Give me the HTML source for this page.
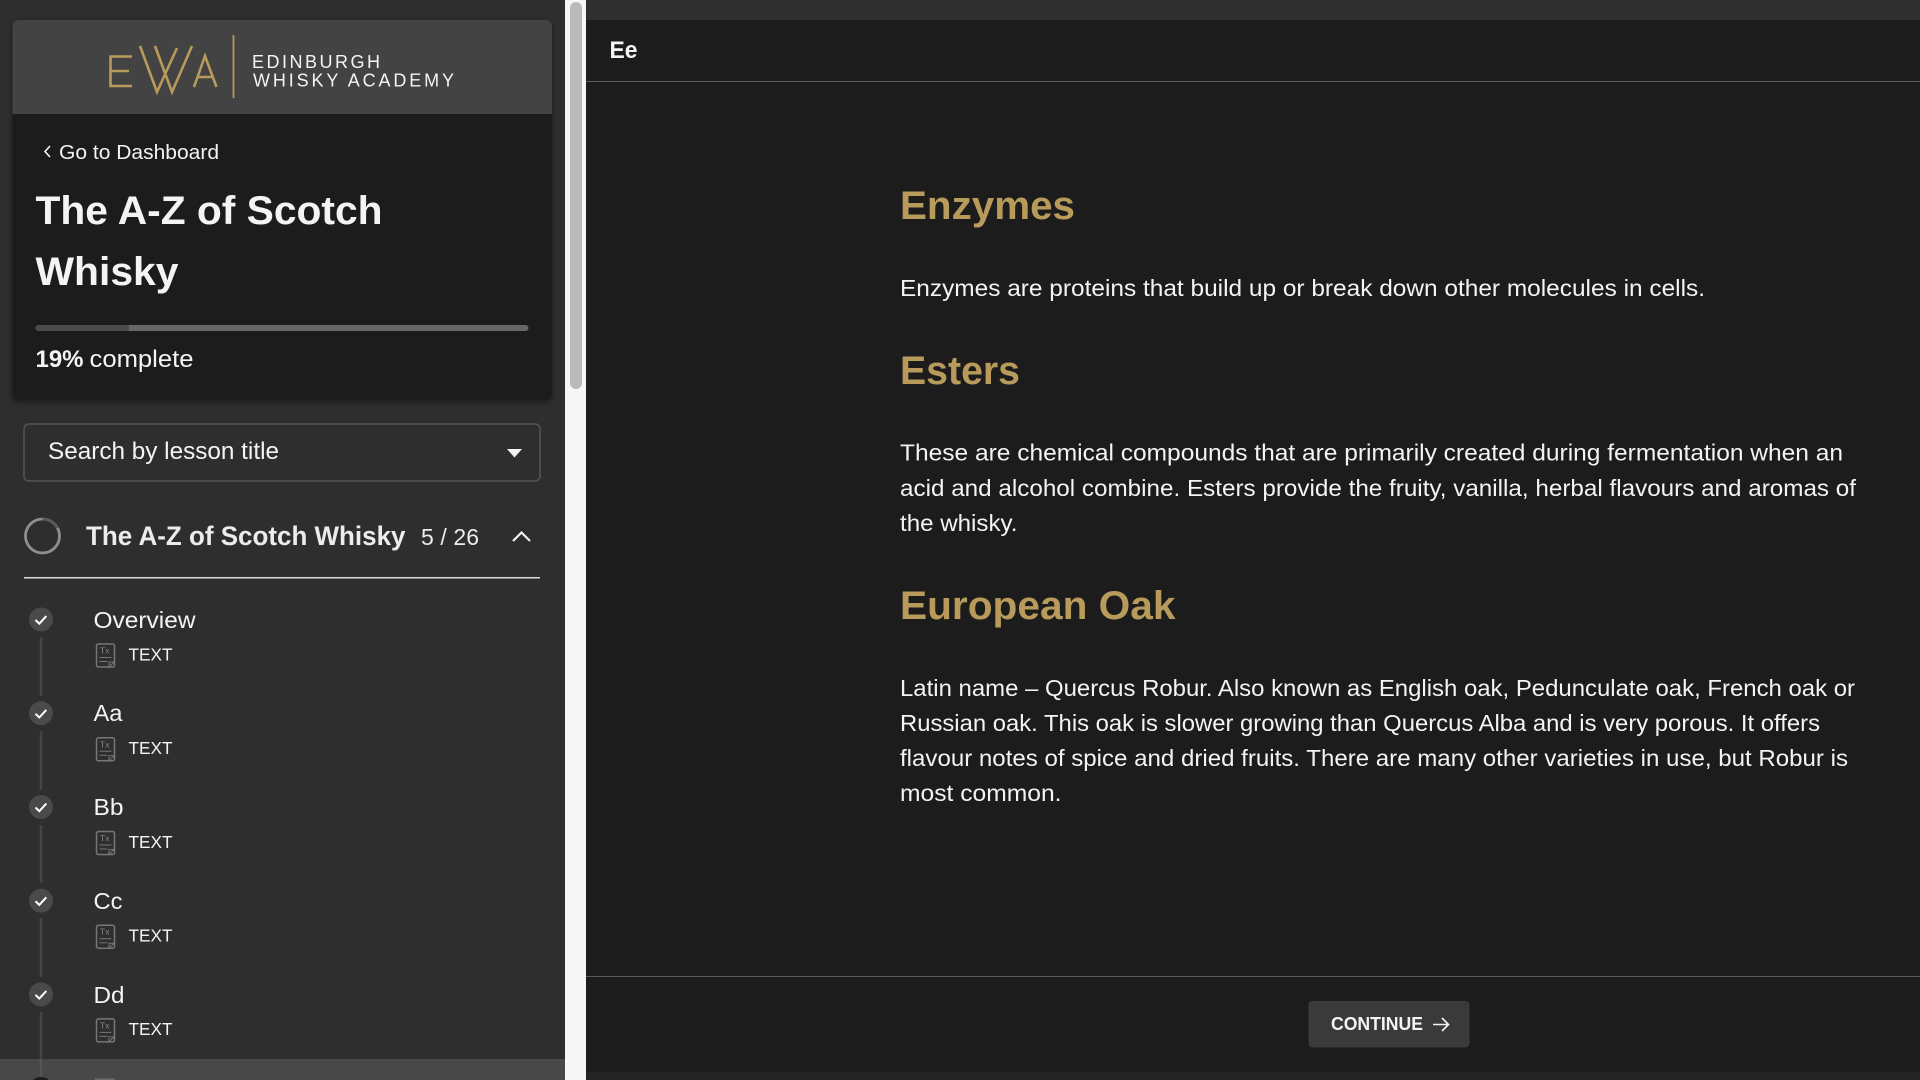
<!DOCTYPE html>
<html lang="en">
<head>
<meta charset="utf-8">
<title>The A-Z of Scotch Whisky</title>
<style>
html,body{margin:0;padding:0;width:1920px;height:1080px;overflow:hidden;background:#1c1c1c}
svg{display:block;position:absolute;left:0;top:0}
text{font-family:"Liberation Sans",sans-serif;fill:#f4f4f4}
.b{font-weight:700}
.g{fill:#b89a5b;font-weight:700;font-size:40px}
.p{font-size:23.5px}
.i{font-size:23.5px}
.t{font-size:17.5px}
</style>
</head>
<body>
<svg width="1920" height="1080" viewBox="0 0 1920 1080" xmlns="http://www.w3.org/2000/svg">
<defs>
<filter id="s" x="-5%" y="-5%" width="110%" height="110%"><feDropShadow dx="0" dy="2" stdDeviation="3" flood-color="#000" flood-opacity=".45"/></filter>
<g id="item">
  <circle cx="41" cy="0" r="12" fill="#4a4a4a"/>
  <path d="M35.5 0.5l3.800 3.700 7-7.600" fill="none" stroke="#fff" stroke-width="2"/>
  <rect x="96.500" y="24.500" width="18" height="23" rx="2" fill="none" stroke="#777" stroke-width="1.500"/>
  <path d="M99.500 38h12M99.500 42h8M109 47.500l5-5h-5z" fill="none" stroke="#777" stroke-width="1"/>
  <text x="100" y="34" font-size="8.500" style="fill:#888">Tx</text>
</g>
</defs>

<!-- backgrounds -->
<rect width="1920" height="1080" fill="#1c1c1c"/>
<rect x="586" y="0" width="1334" height="20" fill="#2f2f2f"/>
<rect x="586" y="1072" width="1334" height="8" fill="#242424"/>
<rect x="0" y="0" width="565" height="1080" fill="#2e2e2e"/>
<rect x="565" y="0" width="21" height="1080" fill="#f6f6f6"/>
<rect x="570" y="2" width="12" height="387" rx="6" fill="#b9b9b9"/>

<!-- course card -->
<rect x="12.500" y="20" width="539.500" height="380" rx="6" fill="#1c1c1c" filter="url(#s)"/>
<path d="M12.500 114V26a6 6 0 0 1 6-6H546a6 6 0 0 1 6 6v88z" fill="#434343"/>

<!-- logo -->
<g fill="none" stroke="#b89a5b" stroke-width="2.600">
  <path d="M132 56.500H110.500V86H132M110.500 71H129"/>
  <path d="M140 46L157 92L177 48M155 46L172 92L192 46"/>
  <path d="M194 87L205 56L216.500 87M198 77H212"/>
  <path d="M233.500 35V98" stroke-width="1.800"/>
</g>
<text x="252" y="68" font-size="18" textLength="128" lengthAdjust="spacing">EDINBURGH</text>
<text x="253" y="86.500" font-size="18" textLength="201" lengthAdjust="spacing">WHISKY ACADEMY</text>

<!-- course header -->
<path d="M50 146l-5 5.500 5 5.500" fill="none" stroke="#f4f4f4" stroke-width="1.600"/>
<text x="59" y="159" font-size="20.500" textLength="160" lengthAdjust="spacingAndGlyphs">Go to Dashboard</text>
<text x="35.500" y="224" font-size="40" class="b" textLength="347" lengthAdjust="spacingAndGlyphs">The A-Z of Scotch</text>
<text x="35.500" y="285" font-size="40" class="b" textLength="143" lengthAdjust="spacingAndGlyphs">Whisky</text>
<rect x="35.500" y="325" width="493" height="6" rx="3" fill="#666"/>
<path d="M129 325H38.500a3 3 0 0 0 0 6H129z" fill="#4a4a4a"/>
<text x="35.500" y="367" font-size="24" class="b" textLength="48" lengthAdjust="spacingAndGlyphs">19%</text>
<text x="89.500" y="367" font-size="24" textLength="104" lengthAdjust="spacingAndGlyphs">complete</text>

<!-- select -->
<rect x="24" y="424" width="516" height="57" rx="5" fill="none" stroke="#555" stroke-width="1.500"/>
<text x="48" y="459" font-size="24" textLength="231" lengthAdjust="spacingAndGlyphs">Search by lesson title</text>
<path d="M507 449h15l-7.500 8.500z" fill="#f4f4f4"/>

<!-- section -->
<circle cx="42.500" cy="536" r="17" fill="none" stroke="#8f8f8f" stroke-width="2.800"/>
<path d="M42.500 519a17 17 0 0 1 15 9" fill="none" stroke="#5a5a5a" stroke-width="2.800"/>
<text x="86" y="545" font-size="27" class="b" textLength="319.500" lengthAdjust="spacingAndGlyphs" style="fill:#ececec">The A-Z of Scotch Whisky</text>
<text x="421" y="545" font-size="23" textLength="58" lengthAdjust="spacing" style="fill:#ececec">5 / 26</text>
<path d="M513 541l8.500-8.500 8.500 8.500" fill="none" stroke="#f4f4f4" stroke-width="2.200"/>
<rect x="24" y="577" width="516" height="1.500" fill="#dcdcdc"/>

<!-- lessons -->
<g stroke="#444" stroke-width="2.500">
  <path d="M41 637V696M41 731V790M41 825V883M41 918V977M41 1012V1080"/>
</g>
<use href="#item" y="619.500"/>
<use href="#item" y="713.300"/>
<use href="#item" y="807"/>
<use href="#item" y="900.700"/>
<use href="#item" y="994.400"/>
<text class="i" x="93.500" y="628" textLength="102" lengthAdjust="spacingAndGlyphs">Overview</text>
<text class="t" x="128.500" y="660.500" textLength="44" lengthAdjust="spacingAndGlyphs">TEXT</text>
<text class="i" x="93.500" y="721" textLength="29" lengthAdjust="spacingAndGlyphs">Aa</text>
<text class="t" x="128.500" y="754" textLength="44" lengthAdjust="spacingAndGlyphs">TEXT</text>
<text class="i" x="93.500" y="815" textLength="30" lengthAdjust="spacingAndGlyphs">Bb</text>
<text class="t" x="128.500" y="848" textLength="44" lengthAdjust="spacingAndGlyphs">TEXT</text>
<text class="i" x="93.500" y="909" textLength="29" lengthAdjust="spacingAndGlyphs">Cc</text>
<text class="t" x="128.500" y="941.500" textLength="44" lengthAdjust="spacingAndGlyphs">TEXT</text>
<text class="i" x="93.500" y="1003" textLength="31" lengthAdjust="spacingAndGlyphs">Dd</text>
<text class="t" x="128.500" y="1035" textLength="44" lengthAdjust="spacingAndGlyphs">TEXT</text>
<rect x="0" y="1059" width="565" height="21" fill="#484848"/>
<path d="M41 1059V1080" stroke="#555" stroke-width="2.500"/>
<circle cx="41" cy="1089" r="12" fill="#1c1c1c"/>
<rect x="95" y="1078.500" width="20" height="1.500" fill="#6a6a6a"/>

<!-- main header -->
<text x="609.500" y="58" font-size="24" class="b" textLength="28" lengthAdjust="spacingAndGlyphs">Ee</text>
<rect x="586" y="81" width="1334" height="1" fill="#5a5a5a"/>

<!-- article -->
<text class="g" x="900" y="219" textLength="175" lengthAdjust="spacingAndGlyphs">Enzymes</text>
<text class="p" x="900" y="296" textLength="805" lengthAdjust="spacingAndGlyphs">Enzymes are proteins that build up or break down other molecules in cells.</text>
<text class="g" x="900" y="384" textLength="120" lengthAdjust="spacingAndGlyphs">Esters</text>
<text class="p" x="900" y="460.500" textLength="943" lengthAdjust="spacingAndGlyphs">These are chemical compounds that are primarily created during fermentation when an</text>
<text class="p" x="900" y="496" textLength="956" lengthAdjust="spacingAndGlyphs">acid and alcohol combine. Esters provide the fruity, vanilla, herbal flavours and aromas of</text>
<text class="p" x="900" y="531" textLength="117.500" lengthAdjust="spacingAndGlyphs">the whisky.</text>
<text class="g" x="900" y="619" textLength="275.500" lengthAdjust="spacingAndGlyphs">European Oak</text>
<text class="p" x="900" y="696" textLength="955" lengthAdjust="spacingAndGlyphs">Latin name – Quercus Robur. Also known as English oak, Pedunculate oak, French oak or</text>
<text class="p" x="900" y="731" textLength="920" lengthAdjust="spacingAndGlyphs">Russian oak. This oak is slower growing than Quercus Alba and is very porous. It offers</text>
<text class="p" x="900" y="766" textLength="948" lengthAdjust="spacingAndGlyphs">flavour notes of spice and dried fruits. There are many other varieties in use, but Robur is</text>
<text class="p" x="900" y="801" textLength="161.500" lengthAdjust="spacingAndGlyphs">most common.</text>

<!-- footer -->
<rect x="586" y="976" width="1334" height="1" fill="#5a5a5a"/>
<rect x="1308.500" y="1001" width="161" height="46.500" rx="4" fill="#3a3a3a"/>
<text x="1331" y="1030" font-size="18" class="b" textLength="92" lengthAdjust="spacingAndGlyphs">CONTINUE</text>
<path d="M1433 1024.500H1448M1442 1018l6.500 6.500-6.500 6.500" fill="none" stroke="#f4f4f4" stroke-width="1.600"/>
</svg>
</body>
</html>
